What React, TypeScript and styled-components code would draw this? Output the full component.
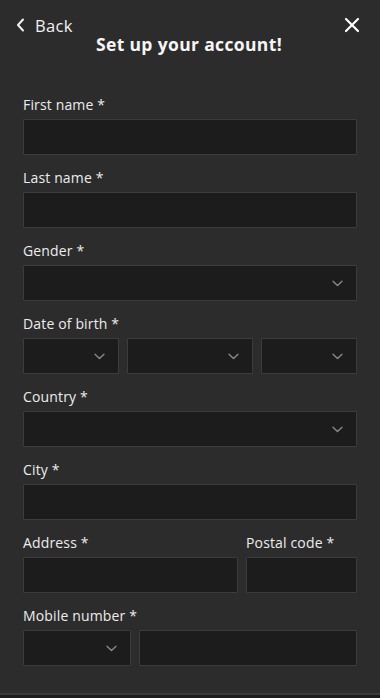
import React from "react";
import styled, { createGlobalStyle } from "styled-components";

const Global = createGlobalStyle`
  html, body { margin: 0; padding: 0; background: #2c2c2c; }
  body { font-family: "Open Sans", "Liberation Sans", sans-serif; color: #f2f2f2; overflow: hidden; }
  * { box-sizing: border-box; }
`;

const Page = styled.div`
  width: 380px;
  height: 100vh;
  overflow: hidden;
  background: #2c2c2c;
  display: flex;
  flex-direction: column;
`;

const Header = styled.header`
  padding: 16px 20px 0 16px;
`;

const TopRow = styled.div`
  display: flex;
  justify-content: space-between;
  align-items: center;
  height: 18px;
`;

const BackButton = styled.button`
  display: flex;
  align-items: center;
  gap: 10px;
  background: none;
  border: none;
  padding: 0;
  color: #f2f2f2;
  font-family: inherit;
  font-size: 16.5px;
  letter-spacing: 0.3px;
  cursor: pointer;
`;

const CloseButton = styled.button`
  background: none;
  border: none;
  padding: 0;
  display: flex;
  cursor: pointer;
`;

const Title = styled.h1`
  margin: 0;
  text-align: center;
  font-size: 17.5px;
  font-weight: 700;
  line-height: 20px;
  color: #f6f6f6;
  padding-left: 2px;
  letter-spacing: 0.35px;
`;

const Form = styled.form`
  display: flex;
  flex-direction: column;
  gap: 14px;
  padding: 42px 23px 0 23px;
`;

const Field = styled.div`
  display: flex;
  flex-direction: column;
  gap: 5px;
  min-width: 0;
`;

const Label = styled.label`
  font-size: 14px;
  line-height: 18px;
  color: #ececec;
  letter-spacing: 0.15px;
`;

const Row = styled.div<{ $cols: string }>`
  display: grid;
  grid-template-columns: ${(p) => p.$cols};
  gap: 8px;
`;

const Input = styled.input`
  height: 36px;
  width: 100%;
  background: #1c1c1c;
  border: 1px solid #3c3c3c;
  border-radius: 1px;
  color: #eee;
  outline: none;
  padding: 0 12px;
  font-family: inherit;
`;

const SelectBox = styled.div`
  height: 36px;
  width: 100%;
  background: #1c1c1c;
  border: 1px solid #3c3c3c;
  border-radius: 1px;
  display: flex;
  align-items: center;
  justify-content: flex-end;
  padding-right: 13px;
`;

const Footer = styled.footer`
  margin-top: 27px;
  flex: 1;
  border-top: 2px solid #3a3a3a;
  background: #1d1d1d;
`;

const Chevron = () => (
  <svg width="11" height="7" viewBox="0 0 11 7" fill="none">
    <path d="M1 1.2 L5.5 5.5 L10 1.2" stroke="#8c8c8c" strokeWidth="1.3" strokeLinecap="round" strokeLinejoin="round" />
  </svg>
);

const Select = () => (
  <SelectBox>
    <Chevron />
  </SelectBox>
);

const App: React.FC = () => (
  <>
    <Global />
    <Page>
      <Header>
        <TopRow>
          <BackButton type="button">
            <svg width="9" height="14" viewBox="0 0 9 14" fill="none">
              <path d="M7 1.5 L2 7 L7 12.5" stroke="#f2f2f2" strokeWidth="2" strokeLinecap="round" strokeLinejoin="round" />
            </svg>
            Back
          </BackButton>
          <CloseButton type="button" aria-label="Close">
            <svg width="16" height="16" viewBox="0 0 16 16" fill="none">
              <path d="M2 2 L14 14 M14 2 L2 14" stroke="#ffffff" strokeWidth="2.2" strokeLinecap="round" />
            </svg>
          </CloseButton>
        </TopRow>
        <Title>Set up your account!</Title>
      </Header>
      <Form>
        <Field>
          <Label>First name *</Label>
          <Input />
        </Field>
        <Field>
          <Label>Last name *</Label>
          <Input />
        </Field>
        <Field>
          <Label>Gender *</Label>
          <Select />
        </Field>
        <Field>
          <Label>Date of birth *</Label>
          <Row $cols="96fr 126fr 96fr">
            <Select />
            <Select />
            <Select />
          </Row>
        </Field>
        <Field>
          <Label>Country *</Label>
          <Select />
        </Field>
        <Field>
          <Label>City *</Label>
          <Input />
        </Field>
        <Row $cols="215fr 111fr">
          <Field>
            <Label>Address *</Label>
            <Input />
          </Field>
          <Field>
            <Label>Postal code *</Label>
            <Input />
          </Field>
        </Row>
        <Field>
          <Label>Mobile number *</Label>
          <Row $cols="108fr 218fr">
            <Select />
            <Input />
          </Row>
        </Field>
      </Form>
      <Footer />
    </Page>
  </>
);

export default App;
